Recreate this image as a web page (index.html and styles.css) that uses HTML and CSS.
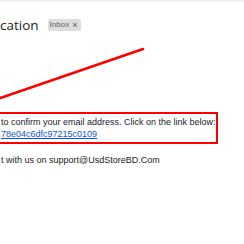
FILE: index.html
```html
<!DOCTYPE html>
<html>
<head>
<meta charset="utf-8">
<link rel="stylesheet" href="styles.css">
</head>
<body>
<div class="page">
  <div class="topstrip"></div>
  <div class="header">
    <h1 class="title">cation</h1>
    <span class="badge"><span class="badge-label">Inbox</span><span class="badge-x">×</span></span>
  </div>
  <div class="message">
    <div class="highlight">
      <p class="line">to confirm your email address. Click on the link below:</p>
      <p class="line"><a class="link" href="#">78e04c6dfc97215c0109</a></p>
    </div>
    <p class="line support">t with us on support@UsdStoreBD.Com</p>
  </div>
  <svg class="arrow" width="244" height="244" viewBox="0 0 244 244">
    <line x1="-2" y1="98.7" x2="143" y2="49" stroke="#ff0000" stroke-width="2.6" stroke-linecap="round"/>
  </svg>
</div>
</body>
</html>
```
FILE: styles.css
```css
html, body {
  margin: 0;
  padding: 0;
  background: #ffffff;
}
.page {
  position: relative;
  width: 244px;
  height: 244px;
  overflow: hidden;
  font-family: "Liberation Sans", Arial, sans-serif;
  color: #222222;
}
.topstrip {
  height: 2px;
  background: #f2f2f2;
}
.header {
  display: flex;
  align-items: center;
  margin-top: 15px;
  height: 16px;
}
.title {
  margin: 0;
  font-family: "Open Sans", sans-serif;
  font-weight: 400;
  font-size: 13.5px;
  line-height: 16px;
  color: #222222;
}
.badge {
  display: flex;
  align-items: center;
  gap: 3px;
  margin-left: 9px;
  height: 12px;
  padding: 0 4px 0 2px;
  background: #dddddd;
  border-radius: 2px;
  font-family: "Liberation Sans", Arial, sans-serif;
  font-size: 8px;
  line-height: 12px;
  color: #666666;
}
.badge-x {
  font-size: 9px;
  color: #555555;
}
.message {
  margin-top: 79px;
}
.highlight {
  box-sizing: border-box;
  width: 228px;
  margin-left: -10px;
  border: 2px solid #ff0000;
  padding: 2px 0 2px 9px;
}
.line {
  margin: 0;
  font-size: 9px;
  line-height: 12px;
  white-space: nowrap;
}
.link {
  color: #1155cc;
  text-decoration: underline;
}
.support {
  margin-top: 10px;
  padding-left: 1px;
}
.arrow {
  position: absolute;
  left: 0;
  top: 0;
}
```
